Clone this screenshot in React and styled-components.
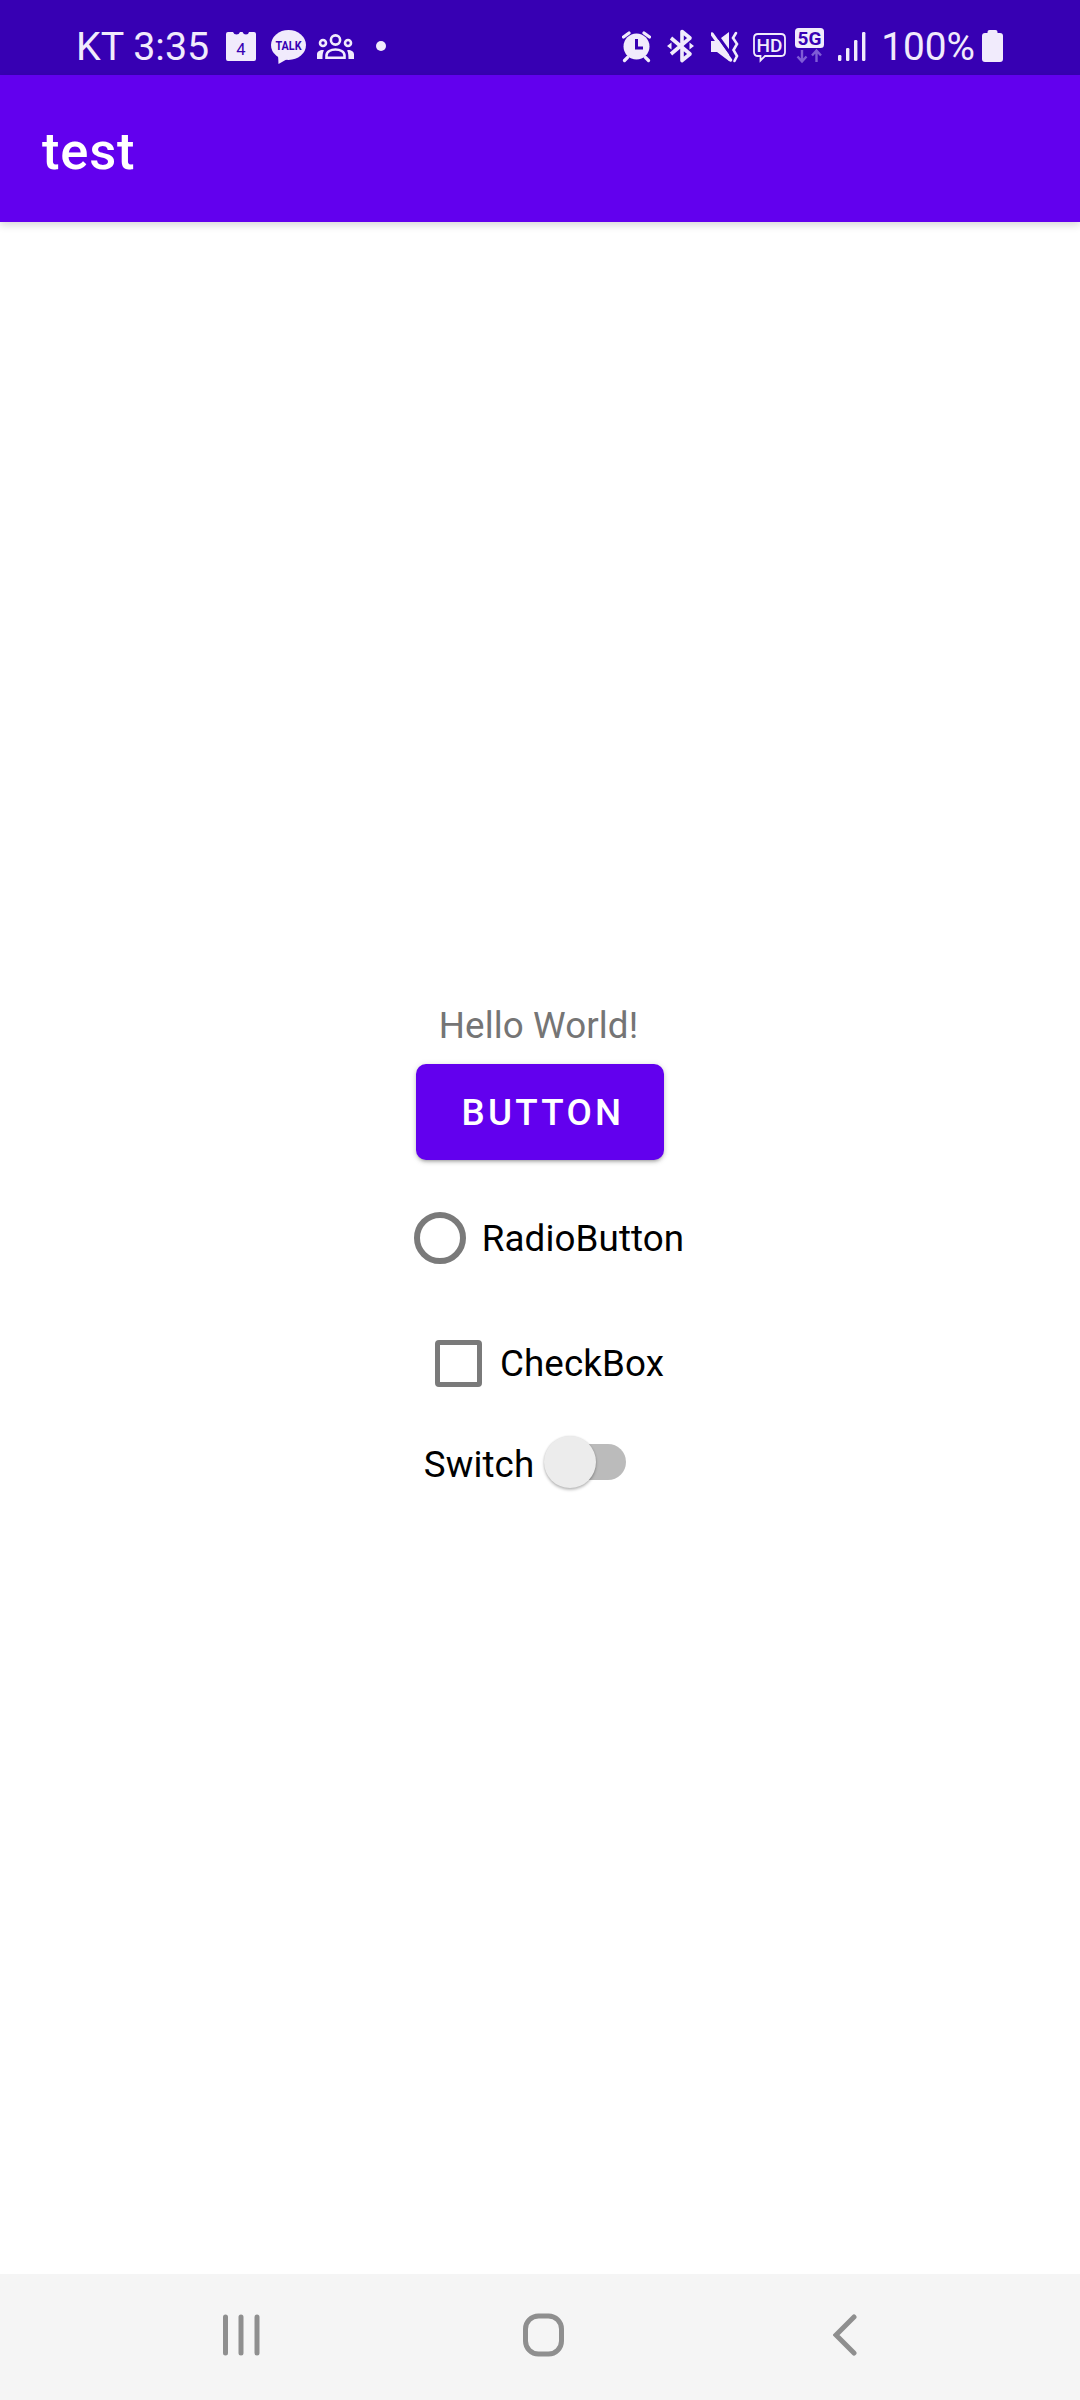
import React from "react";
import styled, { createGlobalStyle } from "styled-components";

const ICON = "#f1ebfc";
const BAR = "#3700b3";

const GlobalStyle = createGlobalStyle`
  html, body {
    margin: 0;
    padding: 0;
    background: #fff;
  }
  body {
    font-family: Roboto, "Liberation Sans", sans-serif;
  }
`;

const Screen = styled.div`
  width: 1080px;
  height: 2400px;
  display: flex;
  flex-direction: column;
  background: #fff;
  overflow: hidden;
`;

const StatusBar = styled.div`
  height: 75px;
  flex: none;
  display: flex;
  justify-content: space-between;
  background: ${BAR};
  padding: 0 77px 0 76px;
`;

const StatusGroup = styled.div`
  display: flex;
  align-items: flex-start;
`;

const StatusText = styled.span`
  padding-top: 18px;
  line-height: 57px;
  font-size: ${(p) => p.$size}px;
  font-weight: 400;
  color: ${ICON};
  white-space: pre;
  margin-left: ${(p) => p.$gap || 0}px;
`;

const Icon = styled.svg`
  height: 75px;
  width: ${(p) => p.$w}px;
  flex: none;
  margin-left: ${(p) => p.$gap || 0}px;
  text {
    font-family: Roboto, "Liberation Sans", sans-serif;
  }
`;

const AppBar = styled.header`
  height: 147px;
  flex: none;
  display: flex;
  align-items: center;
  padding: 4px 0 0 42px;
  box-sizing: border-box;
  background: #6200ee;
  box-shadow: 0 3px 8px rgba(0, 0, 0, 0.16);
  position: relative;
`;

const Title = styled.h1`
  margin: 0;
  font-size: 52.5px;
  font-weight: 500;
  letter-spacing: 0.8px;
  color: #fff;
`;

const Content = styled.main`
  flex: 1;
  display: flex;
  flex-direction: column;
  align-items: center;
  justify-content: center;
`;

const Hello = styled.p`
  margin: 0 3px 0 0;
  height: 43px;
  line-height: 45px;
  font-size: 36.75px;
  letter-spacing: 0.1px;
  color: #757575;
`;

const PrimaryButton = styled.button`
  width: 248px;
  height: 96px;
  margin-top: 18px;
  padding: 0 0 0 6px;
  border: 0;
  border-radius: 10px;
  background: #6200ee;
  color: #fff;
  font-family: inherit;
  font-size: 36.75px;
  font-weight: 500;
  letter-spacing: 3.28px;
  box-shadow: 0 3px 3px -2px rgba(0, 0, 0, 0.2), 0 2px 4px rgba(0, 0, 0, 0.14),
    0 1px 7px rgba(0, 0, 0, 0.12);
`;

const Option = styled.label`
  display: flex;
  align-items: center;
  gap: ${(p) => p.$gap}px;
  margin: ${(p) => p.$top}px ${(p) => p.$right || 0}px 0 ${(p) => p.$left || 0}px;
  font-size: 36.75px;
  letter-spacing: 0.1px;
  color: #000;
`;

const Radio = styled.span`
  width: 52px;
  height: 52px;
  box-sizing: border-box;
  border: 6px solid #7a7a7a;
  border-radius: 50%;
`;

const Check = styled.span`
  width: 47px;
  height: 47px;
  box-sizing: border-box;
  border: 5.5px solid #7a7a7a;
  border-radius: 4px;
`;

const SwitchControl = styled.span`
  display: flex;
  align-items: center;
  padding-bottom: 5px;
`;

const Thumb = styled.span`
  position: relative;
  width: 52px;
  height: 52px;
  margin-right: -39px;
  border-radius: 50%;
  background: #ececec;
  box-shadow: 0 2px 3px rgba(0, 0, 0, 0.25), 0 0 2px rgba(0, 0, 0, 0.12);
`;

const Track = styled.span`
  width: 69px;
  height: 36px;
  border-radius: 18px;
  background: #bbbbbb;
`;

const NavBar = styled.nav`
  height: 126px;
  flex: none;
  display: grid;
  grid-template-columns: repeat(3, 302px);
  justify-items: center;
  align-items: center;
  padding-left: 90px;
  padding-bottom: 4px;
  box-sizing: border-box;
  background: #f5f5f5;
`;

const NavIcon = styled.svg`
  width: ${(p) => p.$w}px;
  height: 44px;
  display: block;
`;

function CalendarIcon({ gap }) {
  return (
    <Icon $w={30} $gap={gap} viewBox="0 0 30 75">
      <path
        fill={ICON}
        d="M2 32H7Q8 34.5 10.5 34.5T14 32H16.5Q17.5 34.5 20 34.5T23 32H28Q30 32 30 34V59Q30 61 28 61H2Q0 61 0 59V34Q0 32 2 32Z"
      />
      <text x="15" y="55" fontSize="16.5" textAnchor="middle" fill={BAR}>
        4
      </text>
    </Icon>
  );
}

function TalkIcon({ gap }) {
  return (
    <Icon $w={35} $gap={gap} viewBox="0 0 35 75">
      <ellipse cx="17.5" cy="45" rx="17.5" ry="15" fill={ICON} />
      <path d="M7 54L7.5 64L18 58Z" fill={ICON} />
      <text
        x="4.5"
        y="49.5"
        fontSize="12"
        fontWeight="700"
        textLength="26"
        lengthAdjust="spacingAndGlyphs"
        fill={BAR}
      >
        TALK
      </text>
    </Icon>
  );
}

function PeopleIcon({ gap }) {
  return (
    <Icon $w={37} $gap={gap} viewBox="0 0 37 75">
      <g fill="none" stroke={ICON} strokeWidth="2.6">
        <circle cx="18.5" cy="40" r="4.6" />
        <circle cx="6" cy="43" r="3" />
        <circle cx="31" cy="43" r="3" />
        <path d="M9.5 57.7V55.5C9.5 51.5 14 49.5 18.5 49.5S27.5 51.5 27.5 55.5V57.7Z" />
      </g>
      <path
        fill={ICON}
        d="M0 59V54.5C0 51.5 2.5 50 6 50L7 50.5C6 52 5.5 54 5.5 59ZM37 59V54.5C37 51.5 34.5 50 31 50L30 50.5C31 52 31.5 54 31.5 59Z"
      />
    </Icon>
  );
}

function DotIcon({ gap }) {
  return (
    <Icon $w={10} $gap={gap} viewBox="0 0 10 75">
      <circle cx="5" cy="46" r="5" fill={ICON} />
    </Icon>
  );
}

function AlarmIcon({ gap }) {
  return (
    <Icon $w={29} $gap={gap} viewBox="0 0 29 75">
      <circle cx="14.5" cy="46.5" r="13" fill={ICON} />
      <path d="M14.5 39V48H21" fill="none" stroke={BAR} strokeWidth="3" />
      <path
        d="M1.5 37L7 33M27.5 37L22 33M5.5 57.5L2.5 60.5M23.5 57.5L26.5 60.5"
        fill="none"
        stroke={ICON}
        strokeWidth="3.2"
        strokeLinecap="round"
      />
    </Icon>
  );
}

function BluetoothIcon({ gap }) {
  return (
    <Icon $w={27} $gap={gap} viewBox="0 0 27 75">
      <path
        d="M4 38L23 54L15 60.5V31.5L23 38L4 54"
        fill="none"
        stroke={ICON}
        strokeWidth="3.6"
        strokeLinejoin="round"
      />
      <path d="M0 46L4.5 42.5V49.5ZM27 46L22.5 42.5V49.5Z" fill={ICON} />
    </Icon>
  );
}

function MuteIcon({ gap }) {
  return (
    <Icon $w={28} $gap={gap} viewBox="0 0 28 75">
      <path d="M0 41H6L18 32V61L6 52H0Z" fill={ICON} />
      <path d="M3 31L21 56" stroke={BAR} strokeWidth="3" />
      <path d="M1 34L19.5 60" stroke={ICON} strokeWidth="3.4" strokeLinecap="round" />
      <path
        d="M25 33L22 38L26 44L22.5 50L26 56L23.5 61"
        fill="none"
        stroke={ICON}
        strokeWidth="2.6"
        strokeLinecap="round"
      />
    </Icon>
  );
}

function HdIcon({ gap }) {
  return (
    <Icon $w={33} $gap={gap} viewBox="0 0 33 75">
      <path
        d="M5 34H28Q32 34 32 38V52Q32 56 28 56H12L7.5 60.5V56H5Q1 56 1 52V38Q1 34 5 34Z"
        fill="none"
        stroke={ICON}
        strokeWidth="1.8"
      />
      <text
        x="16.5"
        y="52"
        fontSize="19"
        fontWeight="500"
        textAnchor="middle"
        fill={ICON}
      >
        HD
      </text>
    </Icon>
  );
}

function FiveGIcon({ gap }) {
  return (
    <Icon $w={29} $gap={gap} viewBox="0 0 29 75">
      <rect x="0" y="28" width="29" height="20" rx="3.5" fill={ICON} />
      <text
        x="14.5"
        y="45"
        fontSize="19"
        fontWeight="700"
        textAnchor="middle"
        fill={BAR}
      >
        5G
      </text>
      <path
        d="M7 50V61M2.5 56.5L7 61.5L11.5 56.5M21.5 62V51M17 55.5L21.5 50.5L26 55.5"
        fill="none"
        stroke="#7f5cd6"
        strokeWidth="2.4"
      />
    </Icon>
  );
}

function SignalIcon({ gap }) {
  return (
    <Icon $w={28} $gap={gap} viewBox="0 0 28 75">
      <rect x="0" y="55" width="3.4" height="6" rx="1.2" fill={ICON} />
      <rect x="8" y="48" width="3.4" height="13" rx="1.2" fill={ICON} />
      <rect x="16" y="40" width="3.4" height="21" rx="1.2" fill={ICON} />
      <rect x="24" y="32" width="3.4" height="29" rx="1.2" fill={ICON} />
    </Icon>
  );
}

function BatteryIcon({ gap }) {
  return (
    <Icon $w={21} $gap={gap} viewBox="0 0 21 75">
      <rect x="0" y="33" width="21" height="29" rx="3" fill={ICON} />
      <rect x="5.5" y="30" width="10" height="6" rx="2" fill={ICON} />
    </Icon>
  );
}

function App() {
  return (
    <Screen>
      <GlobalStyle />
      <StatusBar>
        <StatusGroup>
          <StatusText $size={39.4}>KT 3:35</StatusText>
          <CalendarIcon gap={17} />
          <TalkIcon gap={15} />
          <PeopleIcon gap={11} />
          <DotIcon gap={22} />
        </StatusGroup>
        <StatusGroup>
          <AlarmIcon />
          <BluetoothIcon gap={16} />
          <MuteIcon gap={17} />
          <HdIcon gap={14} />
          <FiveGIcon gap={9} />
          <SignalIcon gap={14} />
          <StatusText $size={38.8} $gap={15}>
            100%
          </StatusText>
          <BatteryIcon gap={7} />
        </StatusGroup>
      </StatusBar>

      <AppBar>
        <Title>test</Title>
      </AppBar>

      <Content>
        <Hello>Hello World!</Hello>
        <PrimaryButton>BUTTON</PrimaryButton>
        <Option $gap={16} $top={52} $left={18}>
          <Radio />
          RadioButton
        </Option>
        <Option $gap={18} $top={76} $left={19}>
          <Check />
          CheckBox
        </Option>
        <Option $gap={10} $top={49} $right={30}>
          Switch
          <SwitchControl>
            <Thumb />
            <Track />
          </SwitchControl>
        </Option>
      </Content>

      <NavBar>
        <NavIcon $w={37} viewBox="0 0 37 44">
          <path
            d="M2.5 4V40M18 4V40M34 4V40"
            stroke="#8f8f8f"
            strokeWidth="5"
            strokeLinecap="round"
          />
        </NavIcon>
        <NavIcon $w={41} viewBox="0 0 41 44">
          <rect
            x="2.5"
            y="3"
            width="36"
            height="38"
            rx="13"
            fill="none"
            stroke="#8f8f8f"
            strokeWidth="5"
          />
        </NavIcon>
        <NavIcon $w={24} viewBox="0 0 24 44">
          <path
            d="M21 4L3 22L21 40"
            fill="none"
            stroke="#8f8f8f"
            strokeWidth="5"
            strokeLinecap="round"
          />
        </NavIcon>
      </NavBar>
    </Screen>
  );
}

export default App;
